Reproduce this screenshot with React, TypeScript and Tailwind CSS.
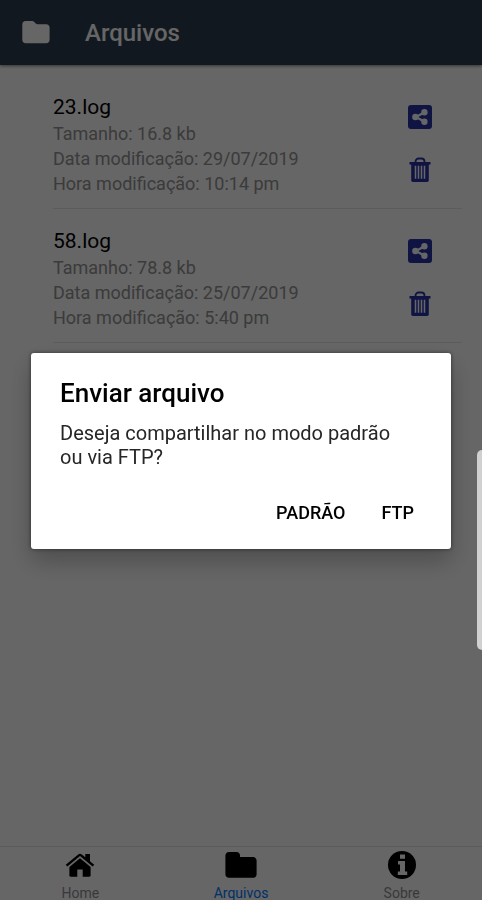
import React, { useState } from 'react';

interface LogFile {
  name: string;
  size: string;
  date: string;
  time: string;
}

const files: LogFile[] = [
  { name: '23.log', size: '16.8 kb', date: '29/07/2019', time: '10:14 pm' },
  { name: '58.log', size: '78.8 kb', date: '25/07/2019', time: '5:40 pm' },
];

const ShareIcon: React.FC = () => (
  <svg viewBox="0 0 24 24" className="w-6 h-6" aria-hidden="true">
    <rect width="24" height="24" rx="3" fill="#2a34a8" />
    <path d="M16.500 7.200 8 12l8.500 4.800" fill="none" stroke="#fff" strokeWidth="2.200" />
    <circle cx="16.400" cy="7.300" r="3.200" fill="#fff" />
    <circle cx="7.400" cy="12" r="3.200" fill="#fff" />
    <circle cx="16.400" cy="16.700" r="3.200" fill="#fff" />
  </svg>
);

const TrashIcon: React.FC = () => (
  <svg viewBox="0 0 24 26" className="w-6 h-[26px]" fill="none" stroke="#2a34a8" aria-hidden="true">
    <path d="M7.500 6V4.800C7.500 2.800 9 1.500 10.600 1.500h2.800c1.600 0 3.100 1.300 3.100 3.300V6" strokeWidth="1.800" />
    <path d="M1.500 6.300h21" strokeWidth="2.600" />
    <path d="M3.200 6h17.600v17.300c0 1-.7 1.700-1.700 1.700H4.900c-1 0-1.700-.7-1.700-1.700z" fill="#2a34a8" stroke="none" />
    <path d="M7.500 8.800v13M10.500 8.800v13M13.500 8.800v13M16.500 8.800v13" stroke="#fff" strokeWidth="1.500" />
  </svg>
);

const HomeIcon: React.FC = () => (
  <svg viewBox="0 0 30 26" className="w-[30px] h-[26px]" aria-hidden="true">
    <path d="M15 6.200 4.400 15v8.600c0 .7.500 1.200 1.200 1.200h6.700v-7.200h5.400v7.200h6.700c.7 0 1.200-.5 1.200-1.200V15z" />
    <path d="M29.200 12.700 25 9.200V2h-4.700v3.300l-3.500-2.900c-1-.9-2.600-.9-3.600 0L.8 12.700l1.500 1.800L15 4l12.700 10.500z" />
  </svg>
);

const FolderIcon: React.FC = () => (
  <svg viewBox="0 0 32 26" className="w-8 h-[26px]" aria-hidden="true">
    <path d="M4 0h7.500c2 0 3.500 1.500 3.500 3.400V5h13c2 0 3.600 1.500 3.600 3.500v13.700c0 2-1.600 3.600-3.600 3.600H4c-2 0-3.600-1.600-3.600-3.600V3.600C.4 1.600 2 0 4 0z" />
  </svg>
);

const InfoIcon: React.FC = () => (
  <svg viewBox="0 0 28 28" className="w-7 h-7" aria-hidden="true">
    <circle cx="14" cy="14" r="14" />
    <path d="M12 3.500h5v4.300h-5zM10 10h7v10.500h2.200V24H9.800v-3.500H12v-7h-2z" fill="#fff" />
  </svg>
);

const tabs = [
  { label: 'Home', icon: <HomeIcon /> },
  { label: 'Arquivos', icon: <FolderIcon /> },
  { label: 'Sobre', icon: <InfoIcon /> },
];

const FileRow: React.FC<{ file: LogFile; onShare: () => void }> = ({ file, onShare }) => (
  <li className="flex justify-between border-b border-neutral-200 pt-[18px] pb-3">
    <div className="text-lg leading-[25px] text-[#949494]">
      <h2 className="text-[21px] leading-7 text-black">{file.name}</h2>
      <p>Tamanho: {file.size}</p>
      <p>Data modificação: {file.date}</p>
      <p>Hora modificação: {file.time}</p>
    </div>
    <div className="flex flex-col items-center gap-7 pt-3 pr-[30px]">
      <button type="button" aria-label="Compartilhar" onClick={onShare}>
        <ShareIcon />
      </button>
      <button type="button" aria-label="Excluir">
        <TrashIcon />
      </button>
    </div>
  </li>
);

const App: React.FC = () => {
  const [dialogOpen, setDialogOpen] = useState(true);
  const [activeTab, setActiveTab] = useState('Arquivos');

  return (
    <div className="min-h-screen flex flex-col bg-white font-[Roboto,sans-serif]">
      {/* Header */}
      <header className="h-[65px] shrink-0 flex items-center gap-[35px] bg-[#2c3e50] px-[22px] pt-px text-white shadow-[0_1px_3px_rgba(0,0,0,0.5)]">
        <svg viewBox="0 0 28 24" className="w-7 h-6" fill="currentColor" aria-hidden="true">
          <path d="M3.600 0h6.600c.8 0 1.500.3 2 .9l1.600 1.700c.4.400.9.600 1.500.600h9c2 0 3.300 1.400 3.300 3.300v12.300c0 2-1.400 3.400-3.300 3.400H3.600c-2 0-3.300-1.400-3.300-3.400V3.400C.3 1.400 1.600 0 3.600 0z" />
        </svg>
        <h1 className="text-2xl font-medium">Arquivos</h1>
      </header>

      {/* File list */}
      <main className="flex-1">
        <ul className="ml-[53px] mr-5 pt-[10px]">
          {files.map((file) => (
            <FileRow key={file.name} file={file} onShare={() => setDialogOpen(true)} />
          ))}
        </ul>
      </main>

      {/* Bottom tabs */}
      <nav className="h-[54px] shrink-0 flex border-t border-neutral-200 overflow-hidden">
        {tabs.map((tab) => (
          <button
            key={tab.label}
            type="button"
            onClick={() => setActiveTab(tab.label)}
            className="flex-1 flex flex-col items-center justify-start pt-1"
          >
            <span className="h-7 shrink-0 flex items-center">{tab.icon}</span>
            <span className={`mt-1 text-sm leading-5 ${activeTab === tab.label ? 'text-[#007aff]' : 'text-[#8e8e93]'}`}>
              {tab.label}
            </span>
          </button>
        ))}
      </nav>

      {/* Share dialog */}
      {dialogOpen && (
        <div className="fixed inset-0 flex items-center justify-center bg-black/60 px-[31px] pt-0.5">
          <div
            role="dialog"
            aria-modal="true"
            aria-labelledby="dialog-title"
            className="w-full max-w-lg rounded-[3px] bg-white px-[29px] pt-6 pb-3 text-black shadow-[0_12px_24px_rgba(0,0,0,0.25),0_0_4px_rgba(0,0,0,0.5)]"
          >
            <h2 id="dialog-title" className="text-[26px] leading-8 font-medium">Enviar arquivo</h2>
            <p className="mt-3 pr-5 text-xl leading-6 text-neutral-800">
              Deseja compartilhar no modo padrão ou via FTP?
            </p>
            <div className="mt-5 flex justify-end gap-5 text-lg font-medium">
              <button type="button" className="h-12 px-2" onClick={() => setDialogOpen(false)}>PADRÃO</button>
              <button type="button" className="h-12 px-2" onClick={() => setDialogOpen(false)}>FTP</button>
            </div>
          </div>
        </div>
      )}

      {/* Edge panel handle */}
      <div className="fixed right-0 top-1/2 h-[200px] w-[5px] rounded-l-md bg-[#d0d0d0]" />
    </div>
  );
};

export default App;
